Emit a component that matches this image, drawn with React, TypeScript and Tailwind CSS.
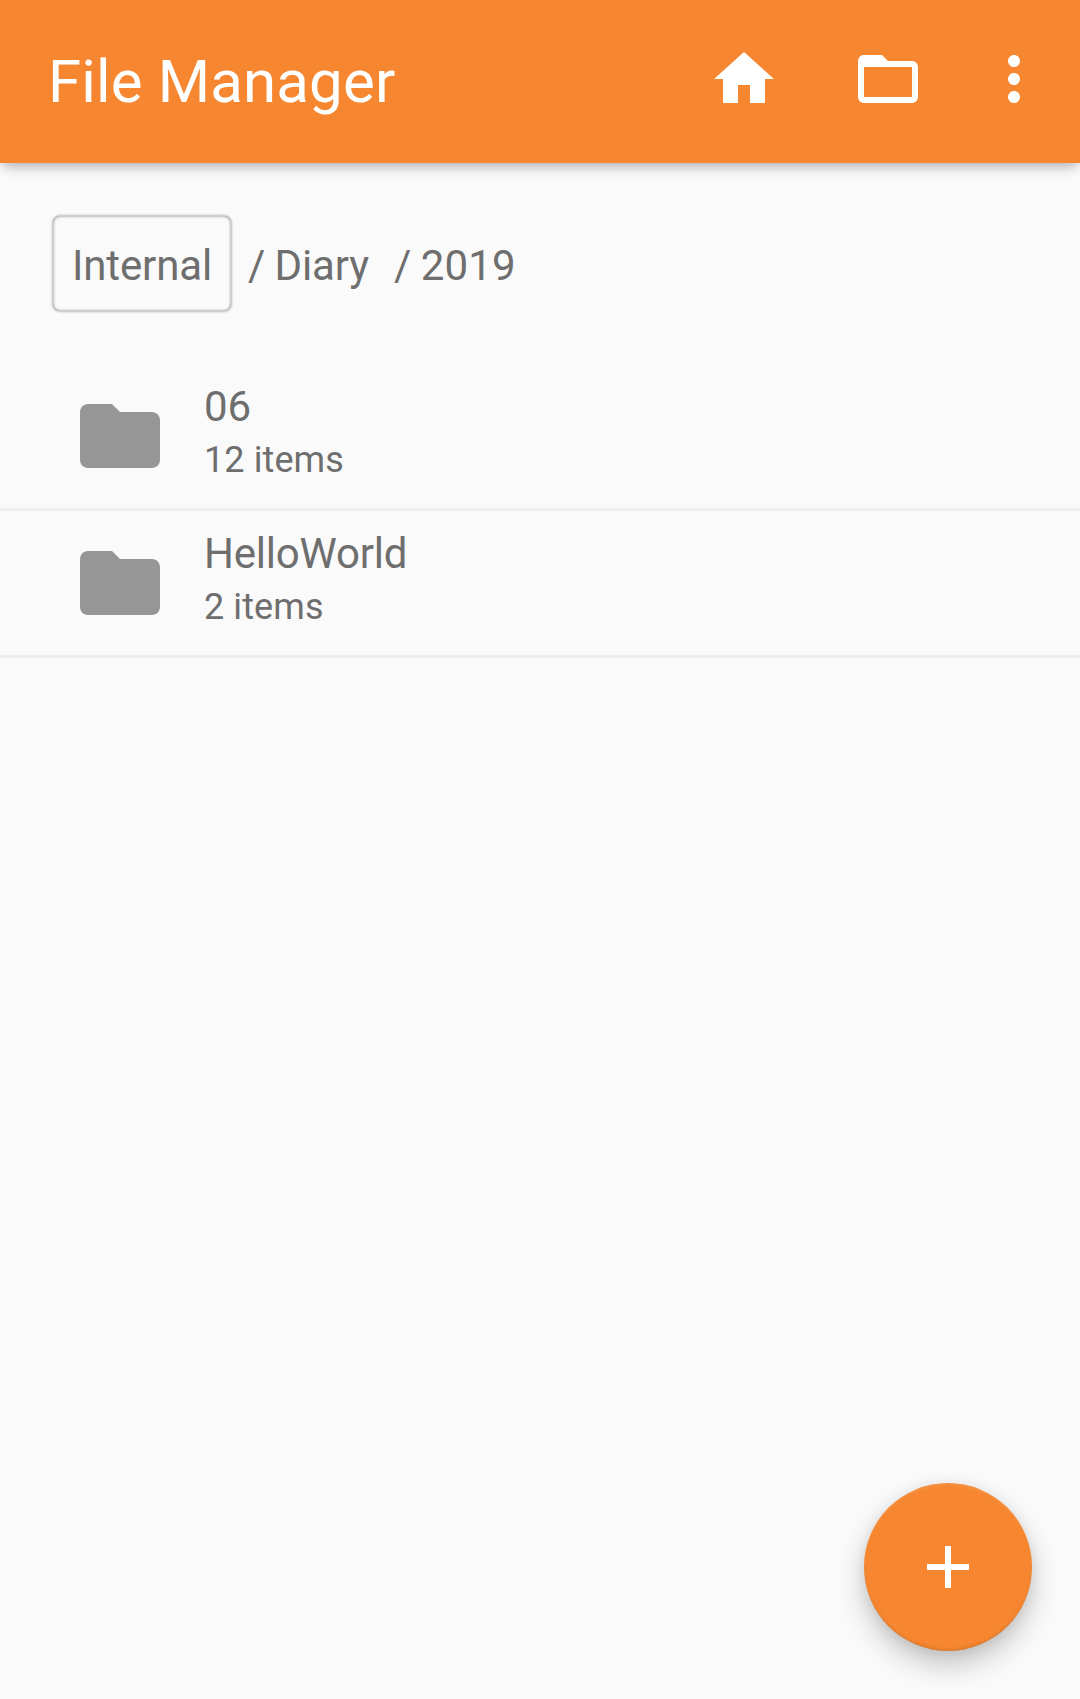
import React from "react";

const entries = [
  { name: "06", detail: "12 items" },
  { name: "HelloWorld", detail: "2 items" },
];

function Glyph({ d, className }: { d: string; className: string }) {
  return (
    <svg viewBox="0 0 24 24" fill="currentColor" className={className} aria-hidden="true">
      <path d={d} />
    </svg>
  );
}

const HOME = "M10 20v-6h4v6h5v-8h3L12 3 2 12h3v8z";
const FOLDER_OPEN =
  "M20 6h-8l-2-2H4c-1.1 0-1.99.9-1.99 2L2 18c0 1.1.9 2 2 2h16c1.1 0 2-.9 2-2V8c0-1.1-.9-2-2-2zm0 12H4V8h16v10z";
const FOLDER =
  "M10 4H4c-1.1 0-1.99.9-1.99 2L2 18c0 1.1.9 2 2 2h16c1.1 0 2-.9 2-2V8c0-1.1-.9-2-2-2h-8l-2-2z";
const MORE =
  "M12 8c1.1 0 2-.9 2-2s-.9-2-2-2-2 .9-2 2 .9 2 2 2zm0 2c-1.1 0-2 .9-2 2s.9 2 2 2 2-.9 2-2-.9-2-2-2zm0 6c-1.1 0-2 .9-2 2s.9 2 2 2 2-.9 2-2-.9-2-2-2z";
const PLUS = "M19 13h-6v6h-2v-6H5v-2h6V5h2v6h6v2z";

export default function App() {
  return (
    <div className="relative flex h-[1699px] w-[1080px] flex-col overflow-hidden bg-[#fafafa] font-['Roboto',sans-serif] text-[#6e6e6e]">
      <header className="flex h-[163px] shrink-0 items-start bg-[#f68730] pl-12 text-white shadow-[0_6px_12px_-3px_rgba(0,0,0,0.32)]">
        <h1 className="flex-1 text-[60px] leading-[163px] font-normal tracking-[0.14px]">File Manager</h1>
        <div className="flex gap-[72px] pt-[43px]">
          <button aria-label="Home">
            <Glyph d={HOME} className="size-[72px]" />
          </button>
          <button aria-label="Storage">
            <Glyph d={FOLDER_OPEN} className="size-[72px]" />
          </button>
          <button aria-label="More options" className="-ml-[18px] mr-[30px]">
            <Glyph d={MORE} className="size-[72px]" />
          </button>
        </div>
      </header>

      <nav className="flex h-[201px] shrink-0 items-start pt-[52px] pl-[53px] text-[42px] tracking-[-0.12px] whitespace-pre">
        <button className="mt-px h-[95px] w-[178px] rounded-[7px] leading-[99px] shadow-[0_0_3px_rgba(0,0,0,0.5),inset_0_0_3px_rgba(0,0,0,0.5)]">
          Internal
        </button>
        <span className="ml-[17px] leading-[101px]">
          /<span className="-ml-px"> Diary</span>
        </span>
        <span className="ml-[25px] leading-[101px]">
          /<span className="-ml-px tracking-[0.15px]"> 2019</span>
        </span>
      </nav>

      <ul>
        {entries.map((entry) => (
          <li key={entry.name} className="flex h-[147px] border-b-3 border-[#eeeeee] pl-[72px]">
            <Glyph d={FOLDER} className="mt-6 size-24 text-[#969696]" />
            <div className="ml-9 pt-[18px]">
              <div className="text-[42px] leading-[50px] tracking-[-0.2px]">{entry.name}</div>
              <div className="mt-1 text-[36px] leading-[48px] tracking-[0.1px]">{entry.detail}</div>
            </div>
          </li>
        ))}
      </ul>

      <button
        aria-label="Add"
        className="absolute right-12 bottom-12 flex size-[168px] items-center justify-center rounded-full bg-[#f68730] text-white shadow-[0_14px_30px_-2px_rgba(0,0,0,0.24),0_2px_14px_rgba(0,0,0,0.07),inset_0_-3px_3px_-1px_rgba(0,0,0,0.1),inset_0_3px_3px_-1px_rgba(255,255,255,0.1)]"
      >
        <Glyph d={PLUS} className="size-[72px]" />
      </button>
    </div>
  );
}
